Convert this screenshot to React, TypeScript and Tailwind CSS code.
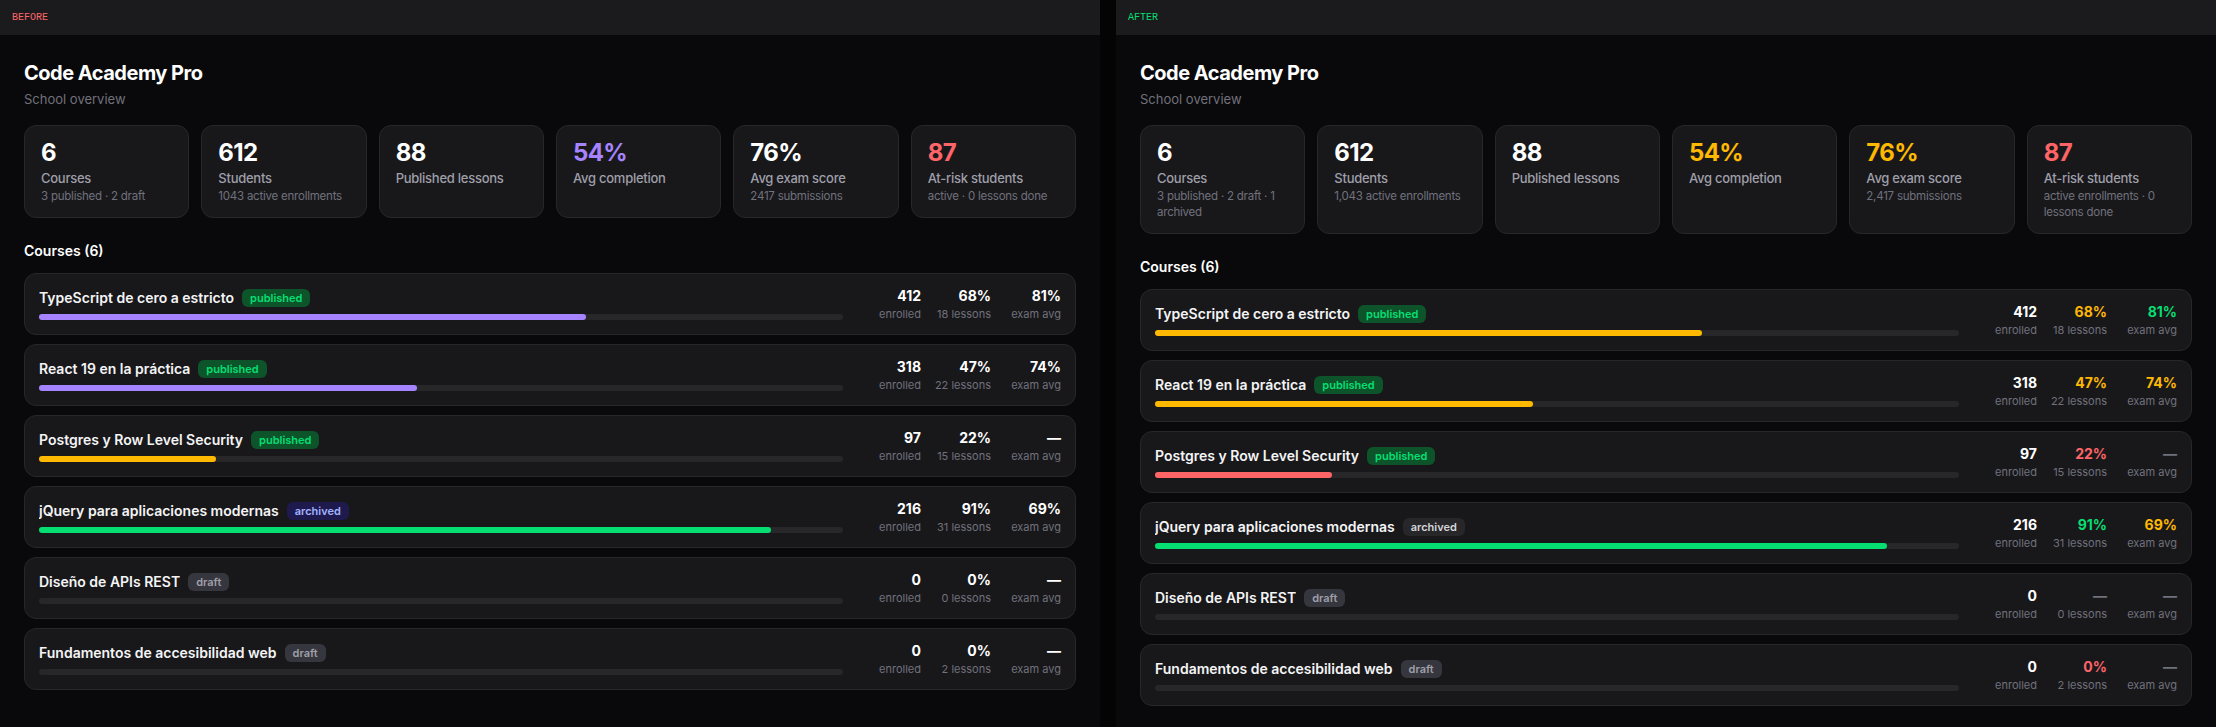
import React from 'react';

type Status = 'published' | 'archived' | 'draft';

interface Course {
    title: string;
    status: Status;
    progress: number;
    enrolled: number;
    completion: string;
    lessons: string;
    exam: string;
}

interface Stat {
    value: string;
    label: string;
    sub?: string;
    tone: string;
}

const courses: Course[] = [
    { title: 'TypeScript de cero a estricto', status: 'published', progress: 68, enrolled: 412, completion: '68%', lessons: '18 lessons', exam: '81%' },
    { title: 'React 19 en la práctica', status: 'published', progress: 47, enrolled: 318, completion: '47%', lessons: '22 lessons', exam: '74%' },
    { title: 'Postgres y Row Level Security', status: 'published', progress: 22, enrolled: 97, completion: '22%', lessons: '15 lessons', exam: '—' },
    { title: 'jQuery para aplicaciones modernas', status: 'archived', progress: 91, enrolled: 216, completion: '91%', lessons: '31 lessons', exam: '69%' },
    { title: 'Diseño de APIs REST', status: 'draft', progress: 0, enrolled: 0, completion: '0%', lessons: '0 lessons', exam: '—' },
    { title: 'Fundamentos de accesibilidad web', status: 'draft', progress: 0, enrolled: 0, completion: '0%', lessons: '2 lessons', exam: '—' },
];

const beforeStats: Stat[] = [
    { value: '6', label: 'Courses', sub: '3 published · 2 draft', tone: 'text-white' },
    { value: '612', label: 'Students', sub: '1043 active enrollments', tone: 'text-white' },
    { value: '88', label: 'Published lessons', tone: 'text-white' },
    { value: '54%', label: 'Avg completion', tone: 'text-violet-400' },
    { value: '76%', label: 'Avg exam score', sub: '2417 submissions', tone: 'text-white' },
    { value: '87', label: 'At-risk students', sub: 'active · 0 lessons done', tone: 'text-red-400' },
];

const afterStats: Stat[] = [
    { value: '6', label: 'Courses', sub: '3 published · 2 draft · 1 archived', tone: 'text-white' },
    { value: '612', label: 'Students', sub: '1,043 active enrollments', tone: 'text-white' },
    { value: '88', label: 'Published lessons', tone: 'text-white' },
    { value: '54%', label: 'Avg completion', tone: 'text-amber-400' },
    { value: '76%', label: 'Avg exam score', sub: '2,417 submissions', tone: 'text-amber-400' },
    { value: '87', label: 'At-risk students', sub: 'active enrollments · 0 lessons done', tone: 'text-red-400' },
];

// bar colour per variant
const barBefore = (p: number) => (p >= 80 ? 'bg-green-400' : p >= 40 ? 'bg-violet-400' : 'bg-amber-400');
const barAfter = (p: number) => (p >= 80 ? 'bg-green-400' : p >= 40 ? 'bg-amber-400' : 'bg-red-400');

const pctTone = (v: string) => {
    if (v === '—') return 'text-zinc-500';
    const n = parseInt(v, 10);
    if (n >= 80) return 'text-green-400';
    if (n >= 40) return 'text-amber-400';
    return 'text-red-400';
};

const Badge: React.FC<{ status: Status; after: boolean }> = ({ status, after }) => {
    let cls = 'bg-green-900 text-green-400';
    if (status === 'archived') cls = after ? 'bg-zinc-800 text-zinc-300' : 'bg-indigo-950 text-indigo-300';
    if (status === 'draft') cls = 'bg-zinc-700/80 text-zinc-400';
    return (
        <span className={`shrink-0 rounded-md px-2 py-[2px] text-[11px] leading-[14px] font-semibold ${cls}`}>
            {status}
        </span>
    );
};

const StatCard: React.FC<{ stat: Stat }> = ({ stat }) => (
    <div className="rounded-xl border border-zinc-800 bg-zinc-900 px-4 py-[13px]">
        <div className={`text-[24px] leading-[28px] font-bold tracking-tight ${stat.tone}`}>{stat.value}</div>
        <div className="mt-0.5 text-[13px] leading-[18px] font-medium tracking-[-0.02em] text-zinc-400">{stat.label}</div>
        {stat.sub && (
            <div className="mt-px text-[11.5px] leading-4 tracking-[-0.02em] text-zinc-500">{stat.sub}</div>
        )}
    </div>
);

const Metric: React.FC<{ value: string; label: string; tone: string }> = ({ value, label, tone }) => (
    <div className="w-[58px] text-right">
        <div className={`text-sm leading-5 font-bold ${tone}`}>{value}</div>
        <div className="text-[11px] leading-4 text-zinc-500 whitespace-nowrap">{label}</div>
    </div>
);

const CourseRow: React.FC<{ course: Course; after: boolean }> = ({ course, after }) => {
    const bar = after ? barAfter(course.progress) : barBefore(course.progress);
    let completion = course.completion;
    if (after && course.lessons === '0 lessons') completion = '—';
    const compTone = after ? pctTone(completion) : 'text-white';
    const examTone = after ? pctTone(course.exam) : 'text-white';
    return (
        <div className="flex items-center gap-5 rounded-xl border border-zinc-800 bg-zinc-900 px-[14px] py-3">
            <div className="min-w-0 flex-1">
                <div className="flex items-center gap-2">
                    <span className="truncate text-sm leading-5 font-semibold text-zinc-100">{course.title}</span>
                    <Badge status={course.status} after={after} />
                </div>
                <div className="mt-1.5 h-1.5 w-full rounded-full bg-zinc-800">
                    <div className={`h-1.5 rounded-full ${bar}`} style={{ width: `${course.progress}%` }} />
                </div>
            </div>
            <div className="flex shrink-0 gap-3">
                <Metric value={String(course.enrolled)} label="enrolled" tone="text-white" />
                <Metric value={completion} label={course.lessons} tone={compTone} />
                <Metric value={course.exam} label="exam avg" tone={examTone} />
            </div>
        </div>
    );
};

const Panel: React.FC<{ after: boolean }> = ({ after }) => {
    const stats = after ? afterStats : beforeStats;
    return (
        <div className="flex flex-col bg-zinc-950">
            <div className="flex h-[35px] items-center bg-[#1b1b1e] px-3">
                <span
                    className={`[font-family:'Liberation_Mono',monospace] text-[10px] ${after ? 'text-green-400' : 'text-red-400'}`}
                >
                    {after ? 'AFTER' : 'BEFORE'}
                </span>
            </div>
            <div className="px-6 pt-6 pb-6">
                <h1 className="text-[20px] leading-7 font-bold tracking-tight text-white">Code Academy Pro</h1>
                <p className="mt-0.5 text-[13px] leading-5 text-zinc-500">School overview</p>

                <div className="mt-4 grid grid-cols-6 gap-3">
                    {stats.map(s => (
                        <StatCard key={s.label} stat={s} />
                    ))}
                </div>

                <h2 className="mt-[23px] mb-3 text-sm leading-5 font-semibold text-white">Courses (6)</h2>
                <div className="flex flex-col gap-[9px]">
                    {courses.map(c => (
                        <CourseRow key={c.title} course={c} after={after} />
                    ))}
                </div>
            </div>
        </div>
    );
};

export default function App() {
    return (
        <div className="grid min-h-screen grid-cols-2 gap-4 bg-[#040405] [font-family:Inter,sans-serif] antialiased">
            <Panel after={false} />
            <Panel after={true} />
        </div>
    );
}
